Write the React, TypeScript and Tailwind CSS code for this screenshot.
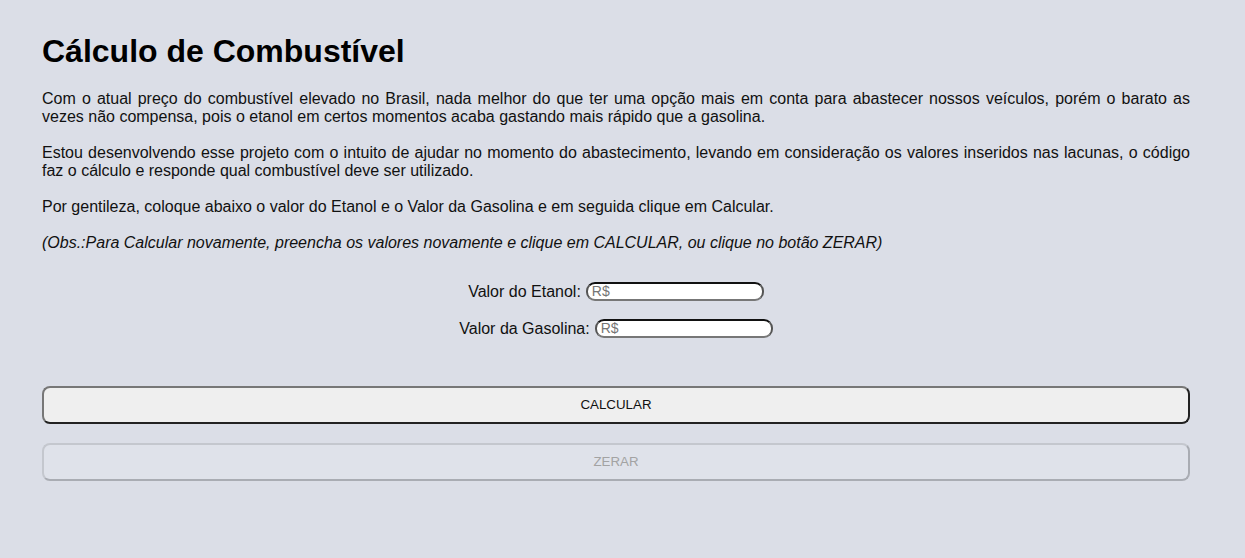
export default function App() {
  return (
    <div className="min-h-[558px] w-full bg-[#dbdee7] text-[#111] font-['Liberation_Sans',Arial,sans-serif]">
      <div className="pl-[42px] pr-[55px] pt-[33px] pb-[40px]">
        <h1 className="text-[32px] leading-[37px] font-bold text-black mb-[20px]">Cálculo de Combustível</h1>
        <p className="text-[16px] leading-[18px] text-justify mb-[18px]">
          Com o atual preço do combustível elevado no Brasil, nada melhor do que ter uma opção mais em conta para abastecer nossos veículos, porém o barato as vezes não compensa, pois o etanol em certos momentos acaba gastando mais rápido que a gasolina.
        </p>
        <p className="text-[16px] leading-[18px] text-justify mb-[18px]">
          Estou desenvolvendo esse projeto com o intuito de ajudar no momento do abastecimento, levando em consideração os valores inseridos nas lacunas, o código faz o cálculo e responde qual combustível deve ser utilizado.
        </p>
        <p className="text-[16px] leading-[18px] mb-[18px]">
          Por gentileza, coloque abaixo o valor do Etanol e o Valor da Gasolina e em seguida clique em Calcular.
        </p>
        <p className="text-[16px] leading-[18px] italic">
          (Obs.:Para Calcular novamente, preencha os valores novamente e clique em CALCULAR, ou clique no botão ZERAR)
        </p>

        <div className="mt-[30px] flex flex-col items-center gap-[18px]">
          <div className="flex items-center gap-[5px] text-[16px] leading-[19px]">
            <span>Valor do Etanol:</span>
            <input
              placeholder="R$"
              className="w-[178px] h-[19px] bg-white rounded-[9px] border-2 border-[#555] border-t-[#111] border-b-[#777] px-[4px] text-[14px] placeholder:text-[#757575] outline-none font-['Liberation_Sans',Arial,sans-serif]"
            />
          </div>
          <div className="flex items-center gap-[5px] text-[16px] leading-[19px]">
            <span>Valor da Gasolina:</span>
            <input
              placeholder="R$"
              className="w-[178px] h-[19px] bg-white rounded-[9px] border-2 border-[#555] border-t-[#111] border-b-[#777] px-[4px] text-[14px] placeholder:text-[#757575] outline-none font-['Liberation_Sans',Arial,sans-serif]"
            />
          </div>
        </div>

        <div className="mt-[48px] flex flex-col gap-[19px]">
          <button className="w-full h-[38px] rounded-[8px] bg-[#efefef] border-2 border-t-[#777] border-l-[#777] border-b-[#222] border-r-[#222] text-[13.33px] text-[#111]">
            CALCULAR
          </button>
          <button disabled className="w-full h-[38px] rounded-[8px] bg-[#dfe2ea] border-2 border-t-[#c4c7ce] border-l-[#c4c7ce] border-b-[#a9acb3] border-r-[#a9acb3] text-[13.33px] text-[#a3a3a3]">
            ZERAR
          </button>
        </div>
      </div>
    </div>
  );
}
